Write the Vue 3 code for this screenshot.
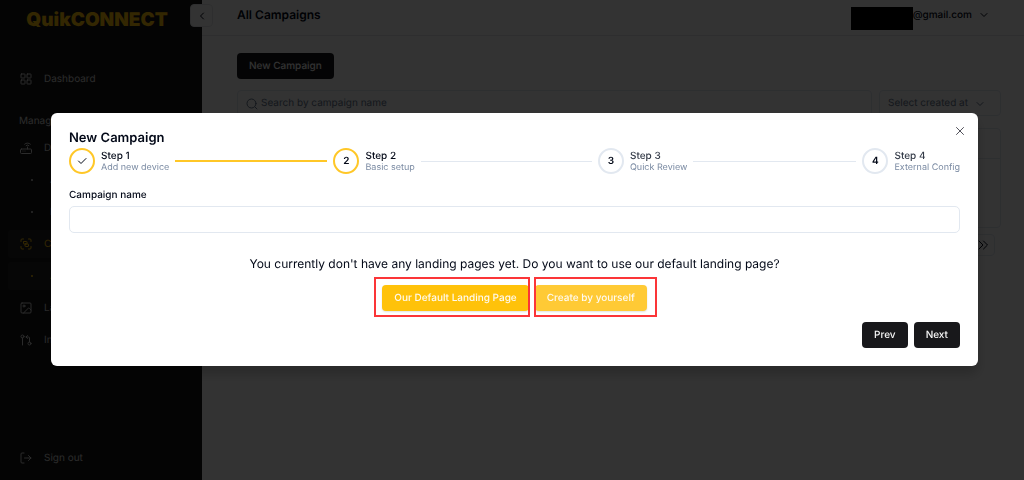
<script setup>
import { ref } from 'vue'

const campaignName = ref('')
const search = ref('')

const steps = [
  { n: 1, title: 'Step 1', text: 'Add new device', state: 'done' },
  { n: 2, title: 'Step 2', text: 'Basic setup', state: 'current' },
  { n: 3, title: 'Step 3', text: 'Quick Review', state: 'todo' },
  { n: 4, title: 'Step 4', text: 'External Config', state: 'todo' },
]

const menu = [
  { icon: 'router', label: 'Devices' },
  { sub: true, label: 'All Devices' },
  { sub: true, label: 'Locations' },
  { icon: 'scan', label: 'Campaigns', active: true },
  { sub: true, label: 'All Campaigns', active: true },
  { icon: 'image', label: 'Landing Pages' },
  { icon: 'pull', label: 'Integrations' },
]
</script>

<template>
  <div class="page">
    <aside class="sidebar">
      <div class="logo">QuikCONNECT</div>
      <button class="collapse" type="button" aria-label="Collapse sidebar">
        <svg class="ico" viewBox="0 0 24 24"><path d="m15 18-6-6 6-6" /></svg>
      </button>
      <nav class="nav">
        <a class="item" href="#">
          <svg class="ico" viewBox="0 0 24 24">
            <rect x="2" y="2" width="8" height="8" rx="1" /><rect x="14" y="2" width="8" height="8" rx="1" />
            <rect x="14" y="14" width="8" height="8" rx="1" /><rect x="2" y="14" width="8" height="8" rx="1" />
          </svg>
          Dashboard
        </a>
        <div class="group">Management</div>
        <a v-for="m in menu" :key="m.label" class="item" :class="{ sub: m.sub, active: m.active }" href="#">
          <span v-if="m.sub" class="dot"></span>
          <svg v-else class="ico" viewBox="0 0 24 24">
            <g v-if="m.icon === 'router'">
              <rect x="1" y="14" width="22" height="9" rx="2" />
              <path d="M6 18h.01M10 18h.01M15 10v4M17.8 7.2a4 4 0 0 0-5.6 0M20.7 4.3a8 8 0 0 0-11.4 0" />
            </g>
            <g v-else-if="m.icon === 'scan'">
              <path d="M2 7V4a2 2 0 0 1 2-2h3M17 2h3a2 2 0 0 1 2 2v3M22 17v3a2 2 0 0 1-2 2h-3M7 22H4a2 2 0 0 1-2-2v-3" />
              <rect x="7" y="7" width="7" height="5" rx="1" /><rect x="10" y="12" width="7" height="5" rx="1" />
            </g>
            <g v-else-if="m.icon === 'image'">
              <rect x="2" y="2" width="20" height="20" rx="2" /><circle cx="8" cy="8" r="2" />
              <path d="m7 22 9-9c1-1 2-1 3 0l3 3" />
            </g>
            <g v-else>
              <circle cx="5" cy="5" r="3" /><path d="M5 8v14" /><circle cx="19" cy="19" r="3" />
              <path d="m15 9-3-3 3-3M12 6h5a2 2 0 0 1 2 2v8" />
            </g>
          </svg>
          {{ m.label }}
        </a>
      </nav>
      <a class="item signout" href="#">
        <svg class="ico" viewBox="0 0 24 24"><path d="M8 22H4a2 2 0 0 1-2-2V4a2 2 0 0 1 2-2h4M17 17l5-5-5-5M22 12H9" /></svg>
        Sign out
      </a>
    </aside>

    <div class="main">
      <header class="top">
        <h1>All Campaigns</h1>
        <button class="account" type="button">
          <span class="mask"></span>@gmail.com
          <svg class="ico chev" viewBox="0 0 24 24"><path d="m6 9 6 6 6-6" /></svg>
        </button>
      </header>
      <main class="content">
        <button class="btn dark" type="button">New Campaign</button>
        <div class="filters">
          <label class="search">
            <svg class="ico" viewBox="0 0 24 24"><circle cx="11" cy="11" r="9" /><path d="m22 22-4-4" /></svg>
            <input v-model="search" type="text" aria-label="Search" placeholder="Search by campaign name" />
          </label>
          <button class="created" type="button">
            Select created at
            <svg class="ico" viewBox="0 0 24 24"><path d="m6 9 6 6 6-6" /></svg>
          </button>
        </div>
        <div class="grid"><div class="grid-head"></div></div>
        <button class="last" type="button" aria-label="Last page">
          <svg class="ico" viewBox="0 0 24 24"><path d="m4 20 8-8-8-8M13 20l8-8-8-8" /></svg>
        </button>
      </main>
    </div>

    <div class="overlay">
      <section class="modal" role="dialog" aria-labelledby="dlg-title">
        <button class="close" type="button" aria-label="Close">
          <svg class="ico" viewBox="0 0 24 24"><path d="M19 5 5 19M5 5l14 14" /></svg>
        </button>
        <h2 id="dlg-title">New Campaign</h2>
        <ol class="steps">
          <li v-for="s in steps" :key="s.n" class="step" :class="s.state">
            <span class="circle">
              <svg v-if="s.state === 'done'" class="ico" viewBox="0 0 24 24"><path d="M20 7 10 17l-5-5" /></svg>
              <template v-else>{{ s.n }}</template>
            </span>
            <span class="words"><b>{{ s.title }}</b><small>{{ s.text }}</small></span>
            <span v-if="s.n < 4" class="line"></span>
          </li>
        </ol>
        <label class="label" for="campaign-name">Campaign name</label>
        <input id="campaign-name" v-model="campaignName" class="field" type="text" />
        <p class="ask">You currently don't have any landing pages yet. Do you want to use our default landing page?</p>
        <div class="choices">
          <div class="choice first"><button class="btn gold" type="button">Our Default Landing Page</button></div>
          <div class="choice second"><button class="btn gold pale" type="button">Create by yourself</button></div>
        </div>
        <div class="foot">
          <button class="btn dark" type="button">Prev</button>
          <button class="btn dark" type="button">Next</button>
        </div>
      </section>
    </div>
  </div>
</template>

<style>
body { background: #fff; }
</style>

<style scoped>
* { box-sizing: border-box; }
.page {
  display: flex;
  min-height: 100vh;
  font: 10px/15px Inter, "Liberation Sans", sans-serif;
  text-rendering: geometricPrecision;
  color: #020817;
}
button, input { font: inherit; color: inherit; text-rendering: inherit; }
button { cursor: pointer; }
h1, h2, p, ol { margin: 0; padding: 0; }
a { text-decoration: none; }
.ico {
  width: 12px;
  height: 12px;
  flex: none;
  fill: none;
  stroke: currentColor;
  stroke-width: 2;
  stroke-linecap: round;
  stroke-linejoin: round;
}

.sidebar {
  position: relative;
  flex: none;
  display: flex;
  flex-direction: column;
  width: 202px;
  padding: 6px 8px 8px;
  background: #171717;
  color: #d4d4d4;
}
.logo {
  text-align: center;
  padding-right: 8px;
  font-size: 19px;
  line-height: 28px;
  font-weight: 900;
  color: #ffc20a;
  height: 59px;
}
.collapse {
  position: absolute;
  top: 4px;
  right: -11px;
  width: 23px;
  height: 23px;
  padding: 0;
  display: grid;
  place-items: center;
  border: 1px solid #e5e7eb;
  border-radius: 4px;
  background: #fff;
  color: #020817;
}
.nav { display: flex; flex-direction: column; gap: 4px; }
.item {
  display: flex;
  align-items: center;
  gap: 12px;
  height: 28px;
  padding: 0 12px;
  border-radius: 4px;
  color: #d4d4d4;
}
.item.active { color: #ffc20a; background: #222; }
.group { height: 33px; padding: 17px 11px 0; }
.dot { width: 2px; height: 2px; margin: 0 5px 0 11px; border-radius: 50%; background: currentColor; }
.signout { margin-top: auto; }

.main { flex: 1; min-width: 0; display: flex; flex-direction: column; }
.top {
  display: flex;
  align-items: center;
  justify-content: space-between;
  height: 36px;
  padding: 0 34px 5px 35px;
  border-bottom: 1px solid #e5e7eb;
}
h1 { font-size: 12px; line-height: 16px; font-weight: 600; }
.account {
  display: flex;
  align-items: center;
  padding: 0;
  border: 0;
  background: none;
  font-weight: 500;
}
.mask { width: 62px; height: 23px; margin-top: 6px; background: #000; }
.chev { margin-left: 6px; }
.content {
  display: flex;
  flex-direction: column;
  align-items: flex-start;
  padding: 17px 23px 0 35px;
}
.btn {
  height: 26px;
  padding: 1px 12px 0;
  border: 0;
  border-radius: 4px;
  font-weight: 500;
  white-space: nowrap;
}
.dark { background: #18181b; color: #fafafa; }
.filters { display: flex; gap: 7px; align-self: stretch; margin-top: 11px; }
.search, .created {
  display: flex;
  align-items: center;
  height: 26px;
  border: 1px solid #e2e8f0;
  border-radius: 4px;
  background: #fff;
  color: #64748b;
}
.search { flex: 1; gap: 3px; padding: 1px 8px 0; }
.search input { flex: 1; min-width: 0; padding: 0; border: 0; outline: 0; background: none; }
.search input::placeholder { color: #64748b; opacity: 1; }
.created { width: 122px; padding: 1px 14px 0 8px; justify-content: space-between; }
.grid { align-self: stretch; height: 100px; margin-top: 12px; border: 1px solid #e2e8f0; border-radius: 4px; }
.grid-head { height: 30px; border-bottom: 1px solid #e2e8f0; }
.last {
  align-self: flex-end;
  display: grid;
  place-items: center;
  width: 24px;
  height: 22px;
  margin: 6px 6px 0 0;
  padding: 0;
  border: 1px solid #e2e8f0;
  border-radius: 4px;
  background: #fff;
}

.overlay {
  position: fixed;
  inset: 0;
  display: grid;
  align-items: center;
  padding: 0 46px 1px 51px;
  background: rgba(0, 0, 0, .8);
}
.modal {
  position: relative;
  display: flex;
  flex-direction: column;
  padding: 18px;
  border-radius: 6px;
  background: #fff;
  box-shadow: 0 8px 12px rgba(0, 0, 0, .2);
}
.close {
  position: absolute;
  top: 12px;
  right: 12px;
  padding: 0;
  display: grid;
  border: 0;
  background: none;
  color: #52525b;
}
h2 { font-size: 13px; line-height: 14px; font-weight: 600; }
.steps { display: flex; margin-top: 3px; list-style: none; }
.step { display: flex; align-items: center; gap: 6px; flex: 1; }
.step:last-child { flex: none; }
.circle {
  flex: none;
  display: grid;
  place-items: center;
  width: 26px;
  height: 26px;
  border: 2px solid #e2e8f0;
  border-radius: 50%;
  font-weight: 600;
}
.done .circle, .current .circle { border-color: #ffc727; }
.words { display: flex; flex-direction: column; padding-top: 2px; white-space: nowrap; }
.words b { font-weight: 500; line-height: 12px; }
.words small { font-size: 9px; line-height: 12px; color: #7b8ba3; }
.todo .words b { color: #333a47; }
.line { flex: 1; height: 1px; margin-right: 6px; background: #e2e8f0; }
.done .line { background: #ffc727; height: 2px; }
.label { margin-top: 14px; font-weight: 500; }
.field {
  width: 100%;
  height: 27px;
  margin-top: 3px;
  padding: 0 9px;
  border: 1px solid #e2e8f0;
  border-radius: 5px;
  background: #fff;
}
.ask { margin-top: 23px; font-size: 12px; line-height: 16px; text-align: center; }
.choices { display: flex; justify-content: center; gap: 6px; margin-top: 13px; }
.choice { position: relative; }
.choice::after { content: ""; position: absolute; border: 2px solid #fb3538; pointer-events: none; }
.first::after { inset: -8px -1px -6px -8px; }
.second::after { inset: -8px -10px -6px -1px; }
.gold { background: #ffc20a; color: #fffaf0; box-shadow: 0 1px 2px rgba(0, 0, 0, .12); }
.pale { background: #ffca35; }
.foot { display: flex; justify-content: flex-end; gap: 6px; margin-top: 11px; }
</style>
